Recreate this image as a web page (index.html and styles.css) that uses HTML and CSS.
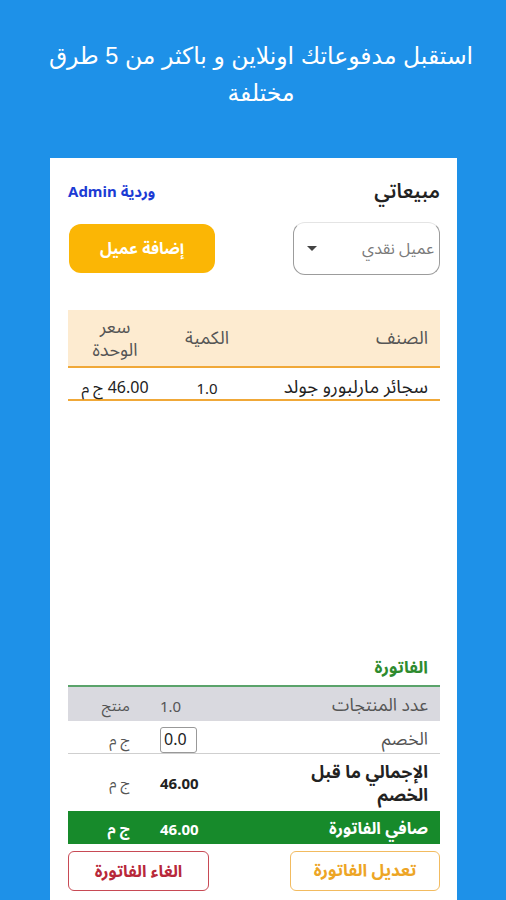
FILE: index.html
```html
<!DOCTYPE html>
<html lang="ar" dir="rtl">
<head>
<meta charset="utf-8">
<title>مبيعاتي</title>
<link rel="stylesheet" href="styles.css">
</head>
<body>
<div class="screen">
  <h1 class="promo">استقبل مدفوعاتك اونلاين و باكثر من 5 طرق مختلفة</h1>
  <main class="card">
    <div class="top-row">
      <span class="page-title">مبيعاتي</span>
      <span class="shift">وردية Admin</span>
    </div>
    <div class="controls">
      <div class="select"><span class="select-text">عميل نقدي</span><span class="caret"></span></div>
      <button class="add-btn">إضافة عميل</button>
    </div>
    <div class="items">
      <div class="items-head">
        <div class="c-name">الصنف</div>
        <div class="c-qty">الكمية</div>
        <div class="c-price">سعر<br>الوحدة</div>
      </div>
      <div class="items-row">
        <div class="c-name">سجائر مارلبورو جولد</div>
        <div class="c-qty">1.0</div>
        <div class="c-price">46.00 ج م</div>
      </div>
    </div>
    <div class="spacer"></div>
    <h2 class="inv-title">الفاتورة</h2>
    <div class="summary">
      <div class="s-row s-grey">
        <div class="s-label">عدد المنتجات</div>
        <div class="s-val">1.0</div>
        <div class="s-unit">منتج</div>
      </div>
      <div class="s-row s-line">
        <div class="s-label">الخصم</div>
        <div class="s-val"><span class="disc-input">0.0</span></div>
        <div class="s-unit">ج م</div>
      </div>
      <div class="s-row s-tall">
        <div class="s-label s-strong"><span class="wrap">الإجمالي ما قبل الخصم</span></div>
        <div class="s-val s-bold">46.00</div>
        <div class="s-unit">ج م</div>
      </div>
      <div class="s-row s-green">
        <div class="s-label">صافي الفاتورة</div>
        <div class="s-val">46.00</div>
        <div class="s-unit">ج م</div>
      </div>
    </div>
    <div class="actions">
      <button class="btn btn-edit">تعديل الفاتورة</button>
      <button class="btn btn-cancel">الغاء الفاتورة</button>
    </div>
  </main>
</div>
</body>
</html>
```

FILE: styles.css
```css
* { box-sizing: border-box; }
html, body { margin: 0; padding: 0; }
body {
  width: 506px;
  height: 900px;
  overflow: hidden;
  background: #1e91e8;
  font-family: "Noto Sans", "Noto Sans Arabic", "DejaVu Sans", sans-serif;
}
.screen { display: flex; flex-direction: column; height: 900px; }
.promo {
  margin: 0;
  height: 158px;
  padding: 38px 12px 0 28px;
  font-family: "Liberation Sans", "DejaVu Sans", sans-serif;
  font-weight: normal;
  font-size: 23.5px;
  line-height: 37px;
  color: #fff;
  text-align: center;
}
.card {
  flex: 1;
  margin: 0 49px 0 50px;
  background: #fff;
  display: flex;
  flex-direction: column;
  padding: 22px 17px 9px 18px;
}
.top-row {
  display: flex;
  justify-content: space-between;
  align-items: center;
  height: 24px;
}
.page-title { font-size: 20px; font-weight: 600; color: #222; }
.shift { font-size: 15px; font-weight: 700; color: #1c3bd4; }
.controls {
  margin-top: 18px;
  display: flex;
  justify-content: space-between;
  align-items: center;
}
.select {
  width: 147px;
  height: 53px;
  border: 1px solid #9c9c9c;
  border-top-color: #e4e4e4;
  border-radius: 12px;
  display: flex;
  align-items: center;
  justify-content: space-between;
  padding: 0 5px 0 13px;
}
.select-text { font-size: 16px; color: #7a7a7a; }
.caret {
  width: 0; height: 0;
  border-left: 5px solid transparent;
  border-right: 5px solid transparent;
  border-top: 5px solid #444;
}
.add-btn {
  width: 146px;
  height: 49px;
  margin-left: 1px;
  border: none;
  border-radius: 12px;
  background: #fbb605;
  color: #fff;
  font-family: inherit;
  font-size: 16px;
  font-weight: 700;
}
.items { margin-top: 35px; }
.items-head, .items-row {
  display: grid;
  grid-template-columns: 1fr 90px 94px;
  align-items: center;
}
.items-head {
  height: 58px;
  background: #fdebd0;
  border-bottom: 2.5px solid #f0a838;
  color: #555;
  font-size: 18px;
}
.items-row {
  height: 33px;
  border-bottom: 2.5px solid #f0a838;
  color: #222;
  font-size: 18.5px;
}
.c-name { padding-right: 12px; }
.c-qty { text-align: center; }
.c-price { text-align: center; line-height: 23px; }
.items-row .c-qty { font-size: 15px; }
.items-row .c-price { font-size: 16px; }
.spacer { flex: 1; }
.inv-title {
  margin: 0 12px 8px 0;
  font-size: 17px;
  line-height: 20px;
  font-weight: 700;
  color: #2e8b2e;
}
.summary { border-top: 2px solid #5aa36a; }
.s-row {
  display: grid;
  grid-template-columns: 1fr 80px 92px;
  align-items: center;
  font-size: 15px;
  color: #555;
}
.s-grey { height: 34px; background: #d9d9df; }
.s-line { height: 33px; border-bottom: 1px solid #cfcfcf; }
.s-tall { height: 57px; }
.s-green { height: 33px; background: #178a2b; color: #fff; font-weight: 700; }
.s-label { padding-right: 12px; font-size: 17.5px; }
.s-green .s-label { font-size: 16.5px; }
.s-strong { color: #222; font-weight: 700; line-height: 1.3; }
.wrap { display: block; max-width: 140px; }
.s-val { text-align: left; }
.s-bold { font-weight: 700; color: #222; }
.s-unit { text-align: right; padding-right: 30px; }
.disc-input {
  display: inline-block;
  width: 37px;
  height: 26px;
  border: 1px solid #999;
  border-radius: 3px;
  padding: 0 3px;
  font-size: 16px;
  line-height: 22px;
  color: #222;
  text-align: left;
}
.actions {
  margin-top: 7px;
  display: flex;
  justify-content: space-between;
}
.btn {
  height: 40px;
  background: #fff;
  border-radius: 6px;
  font-family: inherit;
  font-weight: 700;
}
.btn-edit {
  width: 150px;
  border: 1px solid #f2bb60;
  color: #eda525;
  font-size: 17px;
}
.btn-cancel {
  width: 141px;
  border: 1px solid #c84a55;
  color: #b8283a;
  font-size: 16.5px;
}
```
